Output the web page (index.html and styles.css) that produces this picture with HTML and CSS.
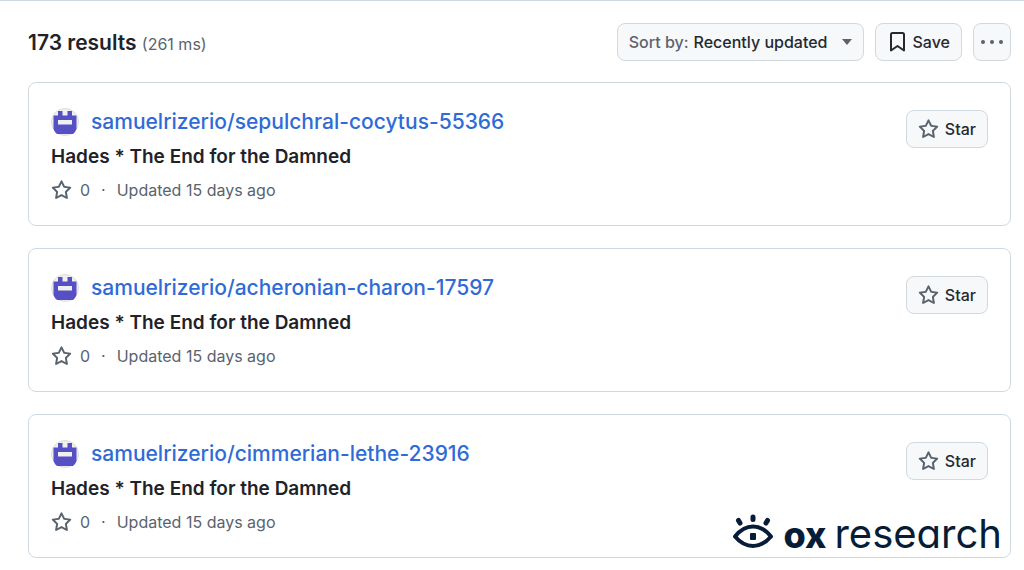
FILE: index.html
```html
<!DOCTYPE html>
<html lang="en">
<head>
    <meta charset="UTF-8">
    <meta name="viewport" content="width=device-width, initial-scale=1.0">
    <title>Repository search results</title>
    <link rel="stylesheet" href="styles.css">
</head>
<body>
    <!-- shared icons -->
    <svg class="sprite" width="0" height="0" aria-hidden="true">
        <symbol id="icon-star" viewBox="0 0 16 16">
            <path d="M8 .25a.75.75 0 0 1 .673.418l1.882 3.815 4.21.612a.75.75 0 0 1 .416 1.279l-3.046 2.97.719 4.192a.751.751 0 0 1-1.088.791L8 12.347l-3.766 1.98a.75.75 0 0 1-1.088-.79l.72-4.194L.818 6.374a.75.75 0 0 1 .416-1.28l4.21-.611L7.327.668A.75.75 0 0 1 8 .25Zm0 2.445L6.615 5.5a.75.75 0 0 1-.564.41l-3.097.45 2.24 2.184a.75.75 0 0 1 .216.664l-.528 3.084 2.769-1.456a.75.75 0 0 1 .698 0l2.77 1.456-.53-3.084a.75.75 0 0 1 .216-.664l2.24-2.183-3.096-.45a.75.75 0 0 1-.564-.41L8 2.694Z"/>
        </symbol>
        <symbol id="icon-avatar" viewBox="0 0 30 30">
            <circle cx="14" cy="15" r="13.500" fill="#f0f0f0" stroke="#dcdde0"/>
            <path fill="#574fc4" fill-rule="evenodd" d="M7 4h4.500v4.500h5V4H21v4.500h4.500V22Q24.500 25 22 27H6Q3.500 25 2.500 22V8.500H7ZM7 13v4.500h14V13Z"/>
        </symbol>
    </svg>

    <main class="page">
        <header class="toolbar">
            <h1 class="count">173 results <span class="time">(261 ms)</span></h1>
            <div class="actions">
                <div class="btn sort">
                    <label for="sort">Sort by:</label>
                    <select id="sort">
                        <option>Recently updated</option>
                        <option>Best match</option>
                        <option>Most stars</option>
                    </select>
                    <svg class="caret" viewBox="0 0 10 6" aria-hidden="true"><path d="M0 0h10L5 6Z"/></svg>
                </div>
                <button class="btn save" type="button">
                    <svg class="bookmark" viewBox="0 0 15 20" aria-hidden="true"><path d="M1 2.500Q1 1 2.500 1h10Q14 1 14 2.500V18.500L7.500 14 1 18.500Z"/></svg>
                    Save
                </button>
                <button class="btn more" type="button" aria-label="More options">
                    <svg class="dots" viewBox="0 0 22 4" aria-hidden="true"><circle cx="2" cy="2" r="2"/><circle cx="11" cy="2" r="2"/><circle cx="20" cy="2" r="2"/></svg>
                </button>
            </div>
        </header>

        <section class="results">
            <article class="card">
                <div class="info">
                    <h2 class="repo">
                        <svg class="avatar" aria-hidden="true"><use href="#icon-avatar"/></svg>
                        <a href="#">samuelrizerio/sepulchral-cocytus-55366</a>
                    </h2>
                    <p class="desc">Hades * The End for the Damned</p>
                    <p class="meta">
                        <svg class="star" aria-hidden="true"><use href="#icon-star"/></svg>
                        <span>0</span><span class="dot">·</span><span>Updated 15 days ago</span>
                    </p>
                </div>
                <button class="btn star-btn" type="button">
                    <svg class="star" aria-hidden="true"><use href="#icon-star"/></svg>
                    Star
                </button>
            </article>

            <article class="card">
                <div class="info">
                    <h2 class="repo">
                        <svg class="avatar" aria-hidden="true"><use href="#icon-avatar"/></svg>
                        <a href="#">samuelrizerio/acheronian-charon-17597</a>
                    </h2>
                    <p class="desc">Hades * The End for the Damned</p>
                    <p class="meta">
                        <svg class="star" aria-hidden="true"><use href="#icon-star"/></svg>
                        <span>0</span><span class="dot">·</span><span>Updated 15 days ago</span>
                    </p>
                </div>
                <button class="btn star-btn" type="button">
                    <svg class="star" aria-hidden="true"><use href="#icon-star"/></svg>
                    Star
                </button>
            </article>

            <article class="card">
                <div class="info">
                    <h2 class="repo">
                        <svg class="avatar" aria-hidden="true"><use href="#icon-avatar"/></svg>
                        <a href="#">samuelrizerio/cimmerian-lethe-23916</a>
                    </h2>
                    <p class="desc">Hades * The End for the Damned</p>
                    <p class="meta">
                        <svg class="star" aria-hidden="true"><use href="#icon-star"/></svg>
                        <span>0</span><span class="dot">·</span><span>Updated 15 days ago</span>
                    </p>
                </div>
                <button class="btn star-btn" type="button">
                    <svg class="star" aria-hidden="true"><use href="#icon-star"/></svg>
                    Star
                </button>
            </article>
        </section>

        <!-- watermark over the last card -->
        <div class="brand">
            <svg class="eye" viewBox="0 0 42 34" aria-hidden="true">
                <path class="lid" d="M3 22.500Q11 12.500 21 12.500T39 22.500Q31 32 21 32T3 22.500Z"/>
                <path class="lash" d="M21 3v2.500M6.500 6.500l1.500 2.500M35.500 6.500L34 9"/>
                <rect x="18" y="19" width="6" height="7" rx="1"/>
            </svg>
            <span class="ox">ox</span>
            <span class="research">research</span>
        </div>
    </main>
</body>
</html>
```
FILE: styles.css
```css
* {
    margin: 0;
    padding: 0;
    box-sizing: border-box;
}

body {
    font-family: Inter, 'Liberation Sans', sans-serif;
    font-size: 16px;
    color: #1f2328;
    background: #fff;
    border-top: 1px solid #d1d9e0;
}

.sprite {
    position: absolute;
}

.page {
    position: relative;
    padding: 22px 13px 11px 28px;
}

.toolbar {
    display: flex;
    justify-content: space-between;
    align-items: center;
    margin-bottom: 21px;
}

.count {
    font-size: 21px;
    font-weight: 600;
}

.time {
    font-size: 16px;
    font-weight: 400;
    color: #59636e;
}

.actions {
    display: flex;
    gap: 11px;
}

.btn {
    display: flex;
    align-items: center;
    height: 38px;
    padding: 0 11px;
    font-family: inherit;
    font-size: 16px;
    font-weight: 500;
    color: #25292e;
    background: #f6f8fa;
    border: 1px solid #d1d9e0;
    border-radius: 8px;
    cursor: pointer;
}

.btn:hover {
    background: #eff2f5;
}

.sort label {
    color: #59636e;
    margin-right: 5px;
}

.sort select {
    appearance: none;
    border: none;
    background: none;
    font: inherit;
    color: inherit;
}

.caret {
    width: 10px;
    height: 6px;
    margin-left: 14px;
    fill: #59636e;
}

.save {
    gap: 8px;
    padding: 0 11px 0 14px;
}

.bookmark {
    width: 15px;
    height: 20px;
    fill: none;
    stroke: #25292e;
    stroke-width: 2;
    stroke-linejoin: round;
}

.more {
    justify-content: center;
    width: 38px;
    padding: 0;
}

.dots {
    width: 22px;
    height: 4px;
    fill: #59636e;
}

.results {
    display: grid;
    gap: 22px;
}

.card {
    display: flex;
    justify-content: space-between;
    align-items: flex-start;
    padding: 22px;
    border: 1px solid #d1d9e0;
    border-radius: 8px;
}

.repo {
    display: flex;
    align-items: center;
    gap: 10px;
    font-size: 21px;
    font-weight: 500;
    line-height: 34px;
}

.repo a {
    color: #2f6bd8;
    text-decoration: none;
}

.repo a:hover {
    text-decoration: underline;
}

.avatar {
    width: 30px;
    height: 30px;
}

.desc {
    margin-top: 4px;
    font-size: 19px;
    font-weight: 600;
    line-height: 28px;
}

.meta {
    display: flex;
    align-items: center;
    margin-top: 7px;
    color: #59636e;
    line-height: 25px;
}

.star {
    width: 21px;
    height: 21px;
    margin-right: 8px;
    fill: #59636e;
}

.dot {
    margin: 0 11px;
}

.star-btn {
    margin-top: 5px;
}

.star-btn .star {
    margin-right: 6px;
}

.brand {
    position: absolute;
    right: 22px;
    bottom: 14px;
    display: flex;
    align-items: baseline;
    color: #071d37;
    font-size: 40px;
    line-height: 40px;
    font-feature-settings: "cv11";
}

.eye {
    width: 42px;
    height: 34px;
    margin-right: 9px;
    fill: #071d37;
}

.lid,
.lash {
    fill: none;
    stroke: #071d37;
    stroke-width: 4;
    stroke-linejoin: round;
}

.lash {
    stroke-width: 5;
    stroke-linecap: round;
}

.ox {
    font-size: 36px;
    font-weight: 800;
    margin-right: 8px;
}

.research {
    font-weight: 400;
}
```
